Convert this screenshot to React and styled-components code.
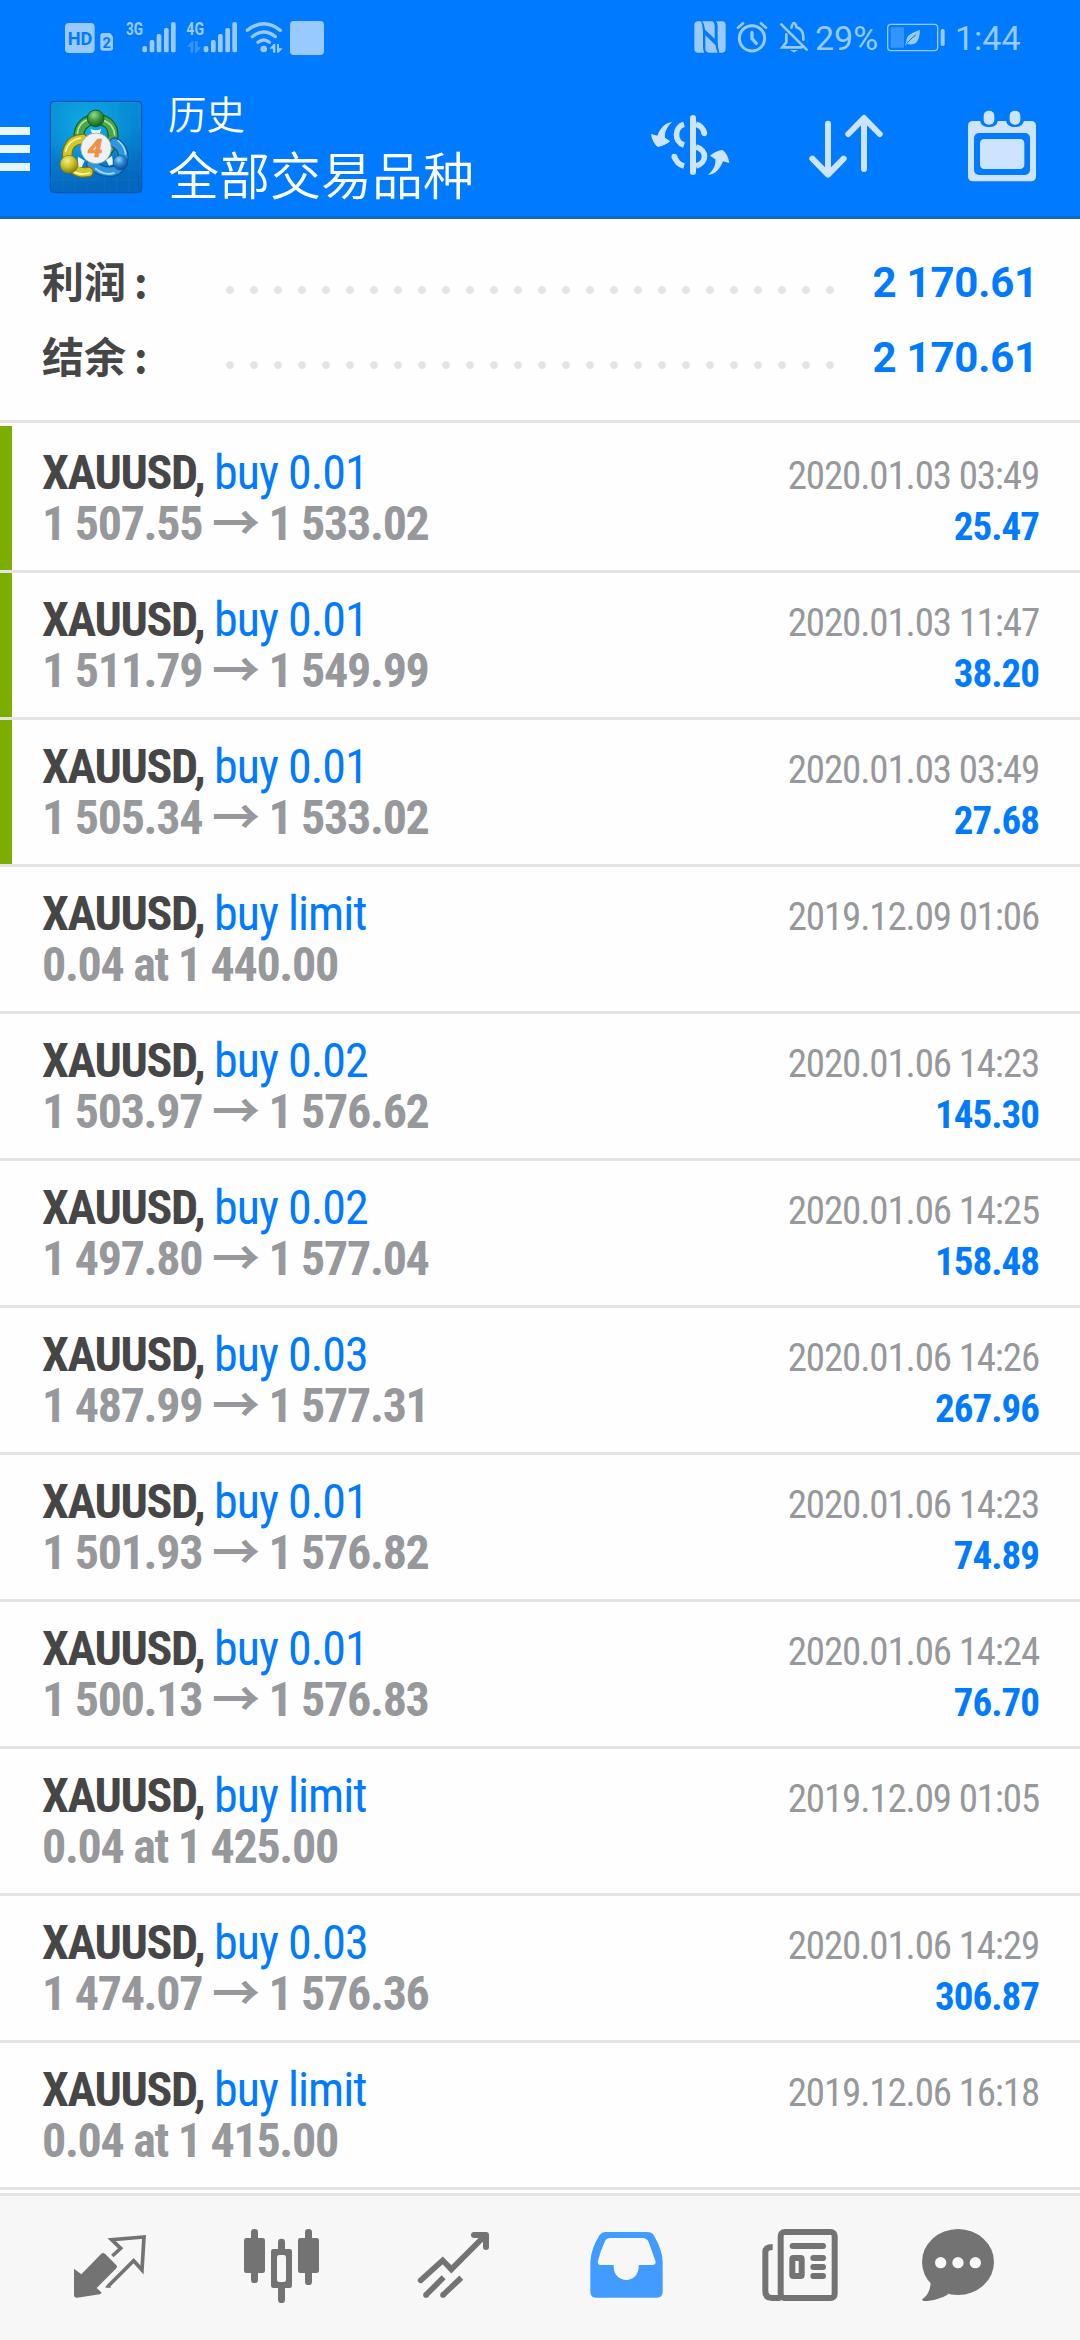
import React from 'react';
import styled, { createGlobalStyle } from 'styled-components';

const GlobalStyle = createGlobalStyle`
  body {
    margin: 0;
    background-color: #ffffff;
  }
`;

const Screen = styled.div`
  display: flex;
  flex-direction: column;
  width: 1080px;
  height: 2340px;
  overflow: hidden;
  font-family: Roboto, 'Noto Sans CJK SC', sans-serif;
  background-color: #fefefe;
`;

const Header = styled.header`
  height: 216px;
  background-color: #007aff;
  border-bottom: 3px solid #0f68c9;
`;

const StatusBar = styled.div`
  display: flex;
  justify-content: space-between;
  height: 72px;
  padding: 0 61px 0 60px;
`;

const StatusGroup = styled.div`
  display: flex;
  align-items: flex-start;
`;

const StatusText = styled.span`
  width: ${({ $width }) => $width}px;
  font-size: 34px;
  line-height: 76px;
  white-space: nowrap;
  color: #99caff;
`;

const AppBar = styled.div`
  display: flex;
  align-items: flex-start;
  height: 144px;
`;

const MenuButton = styled.div`
  display: flex;
  flex-direction: column;
  gap: 10px;
  width: 30px;
  padding-top: 55px;
`;

const MenuLine = styled.span`
  height: 8px;
  background-color: #e8f6ff;
`;

const Logo = styled.svg`
  width: 96px;
  height: 96px;
  margin: 27px 0 0 18px;
`;

const Titles = styled.div`
  display: flex;
  flex-direction: column;
  flex: 1;
  padding: 14px 0 0 24px;
  font-family: 'Noto Sans CJK SC DemiLight', 'Noto Sans CJK SC', sans-serif;
  font-weight: 350;
  color: #ffffff;
`;

const Subtitle = styled.span`
  font-size: 38.5px;
  line-height: 52px;
`;

const Title = styled.span`
  font-size: 51px;
  line-height: 70px;
`;

const Actions = styled.svg`
  width: 440px;
  height: 144px;
`;

const Summary = styled.section`
  height: 183px;
  padding: 18px 42px 0;
  border-bottom: 3px solid #e4e4e4;
`;

const SummaryRow = styled.div`
  display: flex;
  align-items: center;
  height: 75px;
  padding-top: 8px;
  margin-bottom: -8px;
`;

const SummaryLabel = styled.span`
  display: flex;
  width: 176px;
  padding-bottom: 6px;
  font-family: 'Noto Sans CJK SC', sans-serif;
  font-size: 42px;
  font-weight: 700;
  line-height: 60px;
  color: #464646;
`;

const Colon = styled.span`
  margin-left: 8px;
`;

const Dots = styled.div`
  width: 624px;
  height: 24px;
  margin-top: 15px;
  background-image: radial-gradient(circle, #e4e4e4 3.6px, transparent 4.3px);
  background-size: 24px 24px;
`;

const SummaryValue = styled.span`
  flex: 1;
  font-size: 42px;
  font-weight: 700;
  line-height: 60px;
  letter-spacing: -0.2px;
  text-align: right;
  white-space: nowrap;
  color: #007aff;
`;

const DealList = styled.div`
  padding-top: 3px;
`;

const Deal = styled.div`
  box-sizing: border-box;
  height: 147px;
  padding: 21px 41px 0 30px;
  border-bottom: 3px solid #e4e4e4;
  font-family: 'Roboto Condensed', Roboto, 'Noto Sans CJK SC', sans-serif;
  font-stretch: condensed;
  background: linear-gradient(#7cae00, #7cae00) no-repeat 0 0 /
    ${({ $marked }) => ($marked ? '12px' : '0')} 100%;
`;

const DealLine = styled.div`
  display: flex;
  align-items: baseline;
  justify-content: space-between;
  height: 51px;
  padding-left: 12px;
  line-height: 51px;
  white-space: pre;
`;

const Symbol = styled.span`
  font-size: 48px;
  font-weight: 700;
  letter-spacing: -1.35px;
  color: #464646;
`;

const Side = styled.span`
  font-weight: 400;
  letter-spacing: -1px;
  color: #007aff;
`;

const Price = styled.span`
  font-size: 48px;
  font-weight: 700;
  letter-spacing: -1.3px;
  color: #97989b;
`;

const Arrow = styled.span`
  font-family: 'Noto Sans CJK SC', sans-serif;
  font-weight: 700;
  line-height: 0;
`;

const Time = styled.span`
  font-size: 39px;
  letter-spacing: -1.15px;
  color: #97989b;
`;

const Profit = styled.span`
  font-size: 39px;
  font-weight: 700;
  letter-spacing: -1px;
  color: #007aff;
`;

const TabBar = styled.nav`
  display: flex;
  height: 144px;
  margin-top: 3px;
  padding: 0 24px;
  border-top: 3px solid #e4e4e4;
  background-color: #f7f7f7;
`;

const TabIcon = styled.svg`
  width: 172px;
  height: 144px;
  color: ${({ $active }) => ($active ? '#429bff' : '#737373')};
`;

const deals = [
  { side: 'buy 0.01', from: '1 507.55', to: '1 533.02', time: '2020.01.03 03:49', profit: '25.47', marked: true },
  { side: 'buy 0.01', from: '1 511.79', to: '1 549.99', time: '2020.01.03 11:47', profit: '38.20', marked: true },
  { side: 'buy 0.01', from: '1 505.34', to: '1 533.02', time: '2020.01.03 03:49', profit: '27.68', marked: true },
  { side: 'buy limit', order: '0.04 at 1 440.00', time: '2019.12.09 01:06' },
  { side: 'buy 0.02', from: '1 503.97', to: '1 576.62', time: '2020.01.06 14:23', profit: '145.30' },
  { side: 'buy 0.02', from: '1 497.80', to: '1 577.04', time: '2020.01.06 14:25', profit: '158.48' },
  { side: 'buy 0.03', from: '1 487.99', to: '1 577.31', time: '2020.01.06 14:26', profit: '267.96' },
  { side: 'buy 0.01', from: '1 501.93', to: '1 576.82', time: '2020.01.06 14:23', profit: '74.89' },
  { side: 'buy 0.01', from: '1 500.13', to: '1 576.83', time: '2020.01.06 14:24', profit: '76.70' },
  { side: 'buy limit', order: '0.04 at 1 425.00', time: '2019.12.09 01:05' },
  { side: 'buy 0.03', from: '1 474.07', to: '1 576.36', time: '2020.01.06 14:29', profit: '306.87' },
  { side: 'buy limit', order: '0.04 at 1 415.00', time: '2019.12.06 16:18' },
];

const summary = [
  { label: '利润', value: '2 170.61' },
  { label: '结余', value: '2 170.61' },
];

const NetworkIcons = () => (
  <svg width="270" height="72" viewBox="180 0 810 216" fill="#99caff">
    <rect x="195" y="69" width="89" height="90" rx="12" />
    <text x="240" y="135" fontSize="56" fontWeight="700" textAnchor="middle" textLength="74" lengthAdjust="spacingAndGlyphs" fill="#007aff">HD</text>
    <path d="M309 99h21l9 11v35q0 7-7 7h-24q-7 0-7-7v-38q0-8 8-8z" />
    <text x="320" y="144" fontSize="44" fontWeight="700" textAnchor="middle" fill="#007aff">2</text>
    <text x="378" y="106" fontSize="57" fontWeight="700" textLength="51" lengthAdjust="spacingAndGlyphs">3G</text>
    <text x="559" y="106" fontSize="57" fontWeight="700" textLength="53" lengthAdjust="spacingAndGlyphs">4G</text>
    {[427, 611].map((x) => (
      <g key={x}>
        <rect x={x} y="138" width="14" height="19" rx="6" />
        <rect x={x + 22} y="120" width="14" height="37" rx="5" />
        <rect x={x + 43} y="102" width="14" height="55" rx="5" />
        <rect x={x + 65} y="84" width="14" height="73" rx="5" />
        <rect x={x + 86} y="66" width="14" height="91" rx="5" />
      </g>
    ))}
    <path opacity=".35" d="M561 140l14-16h5v34h-8v-18zM585 124h8v18h11l-15 16h-4z" />
    <g fill="none" stroke="#99caff" strokeWidth="10" strokeLinecap="round">
      <path d="M742 91Q791 51 841 91" />
      <path d="M757 110Q791 82 826 110" />
      <path d="M774 127Q791 113 808 127" />
    </g>
    <circle cx="791" cy="147" r="10" />
    <path d="M808 146l13-14h5v26h-7v-12zM831 132h6v13h11l-12 13h-5z" />
    <rect x="870" y="63" width="102" height="102" rx="11" />
  </svg>
);

const AlertIcons = () => (
  <svg width="124" height="72" viewBox="153 0 372 216" fill="none" stroke="#99caff" strokeWidth="8" strokeLinecap="round">
    <g fill="#99caff" stroke="none">
      <path d="M175 64h8q6 14 6 40v38q0 9 4 16h-18q-12 0-12-12v-70q0-12 12-12z" />
      <path d="M187 64h26q11 0 11 14v38l-29-27q-2-16-8-25z" />
      <path d="M196 106l31 30q1 14 6 22h-27q-10 0-10-13z" />
      <path d="M228 64h17q12 0 12 12v70q0 12-12 12h-7q-5-14-5-36v-44q0-8-5-14z" />
    </g>
    <circle cx="336" cy="115" r="38" strokeWidth="9" />
    <path d="M336 97v19l13 14" strokeWidth="10" />
    <path d="M294 83l15-13M363 70l15 13" />
    <path d="M424 73l76 76" />
    <path d="M439 103v24l-12 15h58" />
    <path d="M454 83q4-14 8-14t8 13q20 6 20 30v7" />
    <path d="M457 152h10l-5 3z" strokeWidth="4" />
  </svg>
);

const BatteryIcon = () => (
  <svg width="70" height="72" viewBox="735 0 210 216">
    <rect x="743" y="73" width="150" height="79" rx="10" fill="none" stroke="#99caff" strokeWidth="4" />
    <rect x="752" y="82" width="40" height="61" rx="3" fill="#3395ff" />
    <path d="M796 137q0-8 3-13c0-20 22-28 41-34-1 26-8 42-24 43q-9 1-15-2z" fill="#99caff" />
    <path d="M800 131q12-15 28-27" fill="none" stroke="#007aff" strokeWidth="3" />
    <rect x="902" y="87" width="12" height="51" rx="5" fill="#99caff" />
  </svg>
);

const AppLogo = () => (
  <Logo viewBox="144 297 288 288">
    <defs>
      <linearGradient id="sky" x1="0" y1="0" x2="0.2" y2="1">
        <stop offset="0" stopColor="#0792d6" />
        <stop offset="0.45" stopColor="#0586d2" />
        <stop offset="1" stopColor="#0466bd" />
      </linearGradient>
      <radialGradient id="glow" cx="0.42" cy="0.3" r="0.5">
        <stop offset="0" stopColor="#18bdf0" stopOpacity="0.7" />
        <stop offset="1" stopColor="#18bdf0" stopOpacity="0" />
      </radialGradient>
      <radialGradient id="green" cx="0.4" cy="0.3" r="0.7">
        <stop offset="0" stopColor="#9ad892" />
        <stop offset="0.5" stopColor="#3e9c42" />
        <stop offset="1" stopColor="#126321" />
      </radialGradient>
      <radialGradient id="yellow" cx="0.4" cy="0.3" r="0.7">
        <stop offset="0" stopColor="#f4ef8c" />
        <stop offset="0.5" stopColor="#cfc22c" />
        <stop offset="1" stopColor="#7d8412" />
      </radialGradient>
      <radialGradient id="blue" cx="0.4" cy="0.3" r="0.7">
        <stop offset="0" stopColor="#8fd2fa" />
        <stop offset="0.5" stopColor="#2b84cf" />
        <stop offset="1" stopColor="#0b4b93" />
      </radialGradient>
    </defs>
    <rect x="151" y="304" width="274" height="274" rx="12" fill="url(#sky)" stroke="#0757a8" strokeWidth="4" />
    <rect x="153" y="306" width="270" height="270" rx="10" fill="url(#glow)" />
    <path d="M188 306v270M224 306v270M260 306v270M314 306v270M350 306v270M388 306v270M153 342h270M153 378h270M153 432h270M153 504h270M153 540h270" stroke="#35b5ee" strokeOpacity="0.18" strokeWidth="2" />
    <g fill="none" strokeLinecap="round">
      <path d="M237 412C232 343 342 338 339 408Q337 434 322 452" stroke="#145f1f" strokeWidth="33" />
      <path d="M237 412C232 343 342 338 339 408Q337 434 322 452" stroke="#4ba746" strokeWidth="26" />
      <path d="M232 400Q236 368 266 358M306 360Q342 371 344 405" stroke="#b5e3a5" strokeWidth="5" />
      <path d="M343 428C380 445 378 499 343 513Q308 522 274 492" stroke="#0b569e" strokeWidth="32" />
      <path d="M343 428C380 445 378 499 343 513Q308 522 274 492" stroke="#3195dd" strokeWidth="25" />
      <path d="M354 422Q374 437 377 462M287 506Q314 528 342 519" stroke="#a4ddfa" strokeWidth="5" />
      <path d="M248 417C202 419 195 462 208 486Q224 523 265 516" stroke="#77730b" strokeWidth="32" />
      <path d="M248 417C202 419 195 462 208 486Q224 523 265 516" stroke="#d2c62b" strokeWidth="25" />
      <path d="M197 454Q204 421 241 414M219 513Q237 528 268 519" stroke="#fbf7a3" strokeWidth="5" />
    </g>
    <path d="M271 386q17 9 33 0l-6 18h-20zM234 470l20 12-9 20-13-3zM336 468l-18 12 9 17 13-4z" fill="#e9f6ee" />
    <circle cx="287" cy="355" r="25" fill="url(#green)" stroke="#145f1f" strokeWidth="3" />
    <circle cx="207" cy="493" r="27" fill="url(#yellow)" stroke="#77730b" strokeWidth="2" />
    <circle cx="361" cy="488" r="22" fill="url(#blue)" stroke="#0b569e" strokeWidth="2" />
    <circle cx="288" cy="445" r="46" fill="#eff1f3" stroke="#8d9a8c" strokeWidth="2" />
    <text x="285" y="471" fontSize="76" fontWeight="700" fontStyle="italic" textAnchor="middle" textLength="44" lengthAdjust="spacingAndGlyphs" fill="#ff9130" stroke="#d9915a" strokeWidth="2">4</text>
  </Logo>
);

const HeaderActions = () => (
  <Actions viewBox="0 216 1320 432" fill="none" stroke="#cce4ff" strokeWidth="17">
    <g fill="#cce4ff" stroke="none">
      <path id="swing" d="M33 402L52 407C60 385 76 367 97 366C82 378 73 396 75 413L91 424C80 433 66 440 53 441C42 432 35 418 33 402Z" />
      <use href="#swing" transform="rotate(180 150.5 445.5)" />
    </g>
    <path d="M132 373C102 382 102 426 132 435M168 373Q188 378 193 400M168 441C202 450 202 488 168 498M132 498Q110 492 103 469" />
    <g fill="#cce4ff" stroke="none">
      <circle cx="193" cy="400" r="8.5" />
      <circle cx="103" cy="470" r="8.5" />
    </g>
    <path d="M159 354V516" strokeWidth="18" strokeLinecap="round" />
    <path d="M564 371V522M517 476L564 524L611 476M672 507V356M625 402L672 354L719 402" strokeWidth="18" strokeLinecap="round" strokeLinejoin="round" />
    <rect x="984" y="363" width="204" height="181" rx="14" fill="#cce4ff" stroke="none" />
    <path d="M1020 352v10q4 19 27 19t27-19v-10zM1098 352v10q4 19 27 19t27-19v-10z" fill="#007aff" stroke="none" />
    <rect x="1002" y="399" width="168" height="126" rx="15" fill="#007aff" stroke="none" />
    <rect x="1020" y="417" width="133" height="90" rx="13" fill="#cce4ff" stroke="none" />
    <rect x="1031" y="332" width="32" height="42" rx="15" fill="#cce4ff" stroke="none" />
    <rect x="1109" y="332" width="32" height="42" rx="15" fill="#cce4ff" stroke="none" />
  </Actions>
);

const Tabs = () => (
  <TabBar>
    <TabIcon viewBox="72 108 516 432">
      <path d="M222 326L244 343L303 282Q309 276 315 281L349 316Q353 320 349 325L290 384L304 397Q305 402 299 403L232 413Q222 414 222 404Z" fill="currentColor" />
      <path d="M337 288L362 265L335 239L432 231L426 330L401 302L325 378" fill="none" stroke="currentColor" strokeWidth="11" />
      <path d="M316 380l8-7 10 10h-14q-5 0-4-3z" fill="currentColor" />
    </TabIcon>
    <TabIcon viewBox="588 108 516 432" fill="currentColor">
      <rect x="753" y="207" width="21" height="162" rx="10" />
      <rect x="732" y="234" width="63" height="105" rx="7" />
      <rect x="834" y="236" width="21" height="193" rx="10" />
      <rect x="813" y="267" width="63" height="117" rx="7" />
      <rect x="831" y="285" width="27" height="81" rx="7" fill="#f7f7f7" />
      <rect x="915" y="207" width="21" height="168" rx="10" />
      <rect x="894" y="234" width="63" height="105" rx="7" />
    </TabIcon>
    <TabIcon viewBox="24 108 516 432" fill="none" stroke="currentColor" strokeWidth="17">
      <path d="M182 361L248 301L274 328L376 226" strokeLinecap="round" />
      <path d="M342 225H378V261" strokeWidth="18" strokeLinecap="round" strokeLinejoin="round" />
      <path d="M360 228h18v18z" fill="currentColor" stroke="none" />
      <path d="M198 405L251 352M249 405L304 353" />
      <g fill="currentColor" stroke="none">
        <circle cx="198" cy="405" r="8.5" />
        <circle cx="249" cy="405" r="8.5" />
      </g>
    </TabIcon>
    <TabIcon $active viewBox="540 108 516 432">
      <path fill="currentColor" fillRule="evenodd" d="M735 216H863Q875 216 881 225Q908 272 908 305V396Q908 413 891 413H708Q691 413 691 396V305Q693 265 719 225Q725 216 735 216ZM752 234H848Q861 235 866 246L886 302Q889 315 877 315H836V322C835 345 819 360 799 360C779 360 762 345 761 322V315H722Q711 315 714 302Q722 272 735 243Q740 234 752 234Z" />
    </TabIcon>
    <TabIcon viewBox="-24 108 516 432" fill="none" stroke="currentColor" strokeWidth="18">
      <rect x="182" y="216" width="162" height="198" rx="12" />
      <path d="M158 261Q136 261 136 276V394Q136 414 156 414H182" />
      <path d="M218 258H309M280 294H309M280 321H309M280 348H309" strokeLinecap="round" />
      <rect x="217" y="294" width="28" height="54" rx="3" />
    </TabIcon>
    <TabIcon viewBox="492 108 516 432" fill="currentColor">
      <ellipse cx="714" cy="306" rx="108" ry="99" />
      <path d="M632 368C630 393 622 407 608 416Q604 422 612 423C640 423 665 415 686 402Z" />
      <g fill="#f7f7f7">
        <circle cx="662" cy="308" r="17" />
        <circle cx="714" cy="308" r="17" />
        <circle cx="766" cy="308" r="17" />
      </g>
    </TabIcon>
  </TabBar>
);

const App = () => {
  return (
    <Screen>
      <GlobalStyle />
      <Header>
        <StatusBar>
          <StatusGroup>
            <NetworkIcons />
          </StatusGroup>
          <StatusGroup>
            <AlertIcons />
            <StatusText $width={70}>29%</StatusText>
            <BatteryIcon />
            <StatusText $width={64}>1:44</StatusText>
          </StatusGroup>
        </StatusBar>
        <AppBar>
          <MenuButton>
            <MenuLine />
            <MenuLine />
            <MenuLine />
          </MenuButton>
          <AppLogo />
          <Titles>
            <Subtitle>历史</Subtitle>
            <Title>全部交易品种</Title>
          </Titles>
          <HeaderActions />
        </AppBar>
      </Header>
      <Summary>
        {summary.map((item) => (
          <SummaryRow key={item.label}>
            <SummaryLabel>
              {item.label}
              <Colon>:</Colon>
            </SummaryLabel>
            <Dots />
            <SummaryValue>{item.value}</SummaryValue>
          </SummaryRow>
        ))}
      </Summary>
      <DealList>
        {deals.map((deal, index) => (
          <Deal key={index} $marked={deal.marked}>
            <DealLine>
              <Symbol>
                XAUUSD, <Side>{deal.side}</Side>
              </Symbol>
              <Time>{deal.time}</Time>
            </DealLine>
            <DealLine>
              {deal.order ? (
                <Price>{deal.order}</Price>
              ) : (
                <Price>
                  {deal.from} <Arrow>→</Arrow> {deal.to}
                </Price>
              )}
              <Profit>{deal.profit}</Profit>
            </DealLine>
          </Deal>
        ))}
      </DealList>
      <Tabs />
    </Screen>
  );
};

export default App;
